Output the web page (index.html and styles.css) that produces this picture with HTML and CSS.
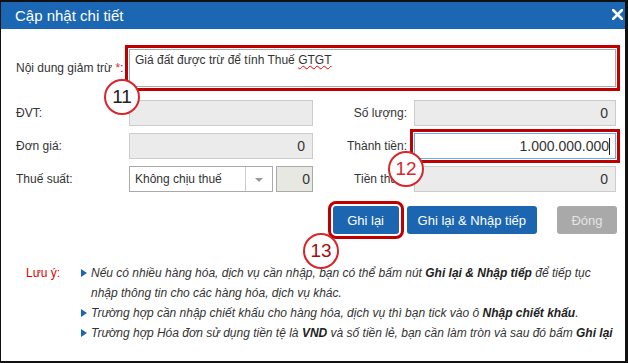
FILE: index.html
```html
<!DOCTYPE html>
<html lang="vi">
<head>
  <meta charset="UTF-8">
  <title>Cập nhật chi tiết</title>
  <link rel="stylesheet" href="styles.css">
</head>
<body>
<div class="dialog">
  <div class="dialog-header">
    <span class="dialog-title">Cập nhật chi tiết</span>
    <svg class="close" width="11" height="11" viewBox="0 0 11 11"><path d="M1 1 L10 10 M10 1 L1 10" stroke="#fff" stroke-width="2.6" stroke-linecap="square"/></svg>
  </div>

  <div class="dialog-body">
    <!-- Nội dung giảm trừ -->
    <div class="row-content">
      <label class="lbl">Nội dung giảm trừ <span class="req">*</span>:</label>
      <div class="textarea mark">Giá đất được trừ để tính Thuế <span class="spell">GTGT</span></div>
      <span class="step step-11">11</span>
    </div>

    <div class="grid">
      <label class="lbl">ĐVT:</label>
      <div class="field"></div>
      <label class="lbl lbl-right">Số lượng:</label>
      <div class="field num">0</div>

      <label class="lbl">Đơn giá:</label>
      <div class="field num">0</div>
      <label class="lbl lbl-right">Thành tiền:</label>
      <div class="field num focus mark">1.000.000.000<span class="caret"></span></div>

      <label class="lbl">Thuế suất:</label>
      <div class="tax">
        <div class="select">
          <span class="select-text">Không chịu thuế</span>
          <span class="select-arrow"></span>
        </div>
        <div class="field num rate">0</div>
      </div>
      <label class="lbl lbl-right">Tiền thuế:</label>
      <div class="field num">0</div>
      <span class="step step-12">12</span>
    </div>

    <div class="actions">
      <button class="btn mark-btn">Ghi lại</button>
      <button class="btn">Ghi lại &amp; Nhập tiếp</button>
      <button class="btn btn-off">Đóng</button>
      <span class="step step-13">13</span>
    </div>

    <!-- Lưu ý -->
    <div class="note">
      <span class="note-title">Lưu ý:</span>
      <ul class="note-list">
        <li>Nếu có nhiều hàng hóa, dịch vụ cần nhập, bạn có thể bấm nút <b>Ghi lại &amp; Nhập tiếp</b> để tiếp tục nhập thông tin cho các hàng hóa, dịch vụ khác.</li>
        <li>Trường hợp cần nhập chiết khấu cho hàng hóa, dịch vụ thì bạn tick vào ô <b>Nhập chiết khấu</b>.</li>
        <li>Trường hợp Hóa đơn sử dụng tiền tệ là <b>VND</b> và số tiền lẻ, bạn cần làm tròn và sau đó bấm <b>Ghi lại</b></li>
      </ul>
    </div>
  </div>
</div>
</body>
</html>
```

FILE: styles.css
```css
body {
  margin: 0;
  background: #fff;
  font-family: "Liberation Sans", Arial, sans-serif;
  color: #333;
}
/* Khung hộp thoại */
.dialog {
  position: relative;
  width: 628px;
  height: 363px;
  box-sizing: border-box;
  border: 2px solid #111;
  border-left-width: 1px;
  border-right-width: 3px;
}
.dialog-header {
  height: 27px;
  background-color: #1b67b3;
  color: #fff;
  display: flex;
  justify-content: space-between;
  align-items: center;
  padding: 0 2px 0 14px;
}
.dialog-title {
  font-size: 15px;
}
.close {
  margin-top: -2px;
}
.dialog-body {
  position: relative;
  padding: 20px 0 0 15px;
}
.lbl {
  font-size: 12px;
  color: #333;
}
.req {
  color: #e0262b;
}
/* Dòng nội dung */
.row-content {
  position: relative;
  display: flex;
  align-items: center;
}
.row-content .lbl {
  width: 113px;
}
.textarea {
  width: 487px;
  height: 38px;
  box-sizing: border-box;
  border: 1px solid #aaa;
  padding: 3px 5px;
  font-size: 12px;
  color: #333;
}
.spell {
  text-decoration: underline wavy #e00;
  text-decoration-thickness: 1px;
}
.mark {
  outline: 3px solid #c00000;
  outline-offset: 1px;
}
/* Lưới các trường */
.grid {
  position: relative;
  display: grid;
  grid-template-columns: 113px 184px 101px 202px;
  grid-auto-rows: 26px;
  row-gap: 7px;
  margin-top: 13px;
  align-items: center;
}
.lbl-right {
  text-align: right;
  padding-right: 7px;
}
.field {
  height: 26px;
  box-sizing: border-box;
  border: 1px solid #ccc;
  background: #ebebeb;
  font-size: 14px;
  line-height: 24px;
  padding: 0 7px;
  color: #333;
}
.num {
  text-align: right;
}
.field.focus {
  background: #fff;
  border-color: #66afe9;
  padding-right: 5px;
}
.caret {
  display: inline-block;
  width: 1px;
  height: 17px;
  background: #222;
  vertical-align: -4px;
}
.tax {
  display: flex;
  gap: 3px;
  height: 26px;
}
.select {
  width: 144px;
  box-sizing: border-box;
  border: 1px solid #aaa;
  background: #fff;
  display: flex;
  font-size: 12px;
}
.select-text {
  flex: 1;
  padding-left: 5px;
  line-height: 24px;
  border-right: 1px solid #ccc;
}
.select-arrow {
  width: 26px;
  position: relative;
}
.select-arrow::after {
  content: "";
  position: absolute;
  left: 9px;
  top: 11px;
  border: 4px solid transparent;
  border-top: 4px solid #999;
  border-bottom: 0;
}
.field.rate {
  width: 37px;
  background: #e8e8e2;
  border-color: #aaa;
  padding: 0 2px;
}
/* Nút bấm */
.actions {
  position: relative;
  display: flex;
  justify-content: flex-end;
  gap: 8px;
  width: 601px;
  margin-top: 14px;
}
.btn {
  height: 28px;
  border: none;
  border-radius: 3px;
  background-color: #1c66b1;
  color: #fff;
  font-family: "Liberation Sans", Arial, sans-serif;
  font-size: 13px;
  padding: 0 11px;
}
.btn-off {
  background-color: #a9a9a9;
  color: #e4e4e4;
  margin-left: 12px;
  width: 60px;
}
.mark-btn {
  width: 66px;
  outline: 3px solid #c00000;
  outline-offset: 2px;
}
/* Số bước chú thích */
.step {
  position: absolute;
  width: 32px;
  height: 32px;
  border: 2px solid #d9262b;
  border-radius: 50%;
  background: #fff;
  font-size: 19px;
  line-height: 32px;
  text-align: center;
  color: #222;
  z-index: 2;
}
.step-11 {
  left: 88px;
  top: 30px;
}
.step-12 {
  left: 372px;
  top: 51px;
  color: #d9262b;
}
.step-13 {
  left: 287px;
  top: 27px;
  color: #a01010;
}
/* Lưu ý */
.note {
  display: flex;
  margin-top: 29px;
  padding-left: 10px;
  font-size: 12px;
  line-height: 20px;
}
.note-title {
  color: #e00000;
  width: 54px;
}
.note-list {
  list-style: none;
  margin: 0;
  padding: 0;
  width: 540px;
  font-style: italic;
  color: #333;
}
.note-list li {
  position: relative;
  padding-left: 11px;
}
.note-list li::before {
  content: "";
  position: absolute;
  left: 1px;
  top: 6px;
  border: 4px solid transparent;
  border-left: 6px solid #1c66b1;
  border-right: 0;
}
.note-list b {
  color: #222;
}
```
